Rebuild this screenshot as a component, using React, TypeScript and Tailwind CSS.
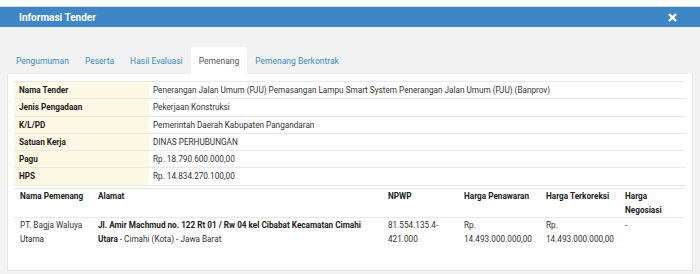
import React from 'react';

const tabs = ['Pengumuman', 'Peserta', 'Hasil Evaluasi', 'Pemenang', 'Pemenang Berkontrak'];

const info: [string, string][] = [
  ['Nama Tender', 'Penerangan Jalan Umum (PJU) Pemasangan Lampu Smart System Penerangan Jalan Umum (PJU) (Banprov)'],
  ['Jenis Pengadaan', 'Pekerjaan Konstruksi'],
  ['K/L/PD', 'Pemerintah Daerah Kabupaten Pangandaran'],
  ['Satuan Kerja', 'DINAS PERHUBUNGAN'],
  ['Pagu', 'Rp. 18.790.600.000,00'],
  ['HPS', 'Rp. 14.834.270.100,00'],
];

const App: React.FC = () => {
  return (
    <div className="w-[700px] h-[274px] overflow-hidden bg-white font-['Roboto',sans-serif] text-[8.2px] text-[#333]">
      <div className="h-[7px] bg-white border-b border-[#dcdcdc]"></div>
      {/* header */}
      <div className="h-[20px] bg-[#3e87c6] flex items-center justify-between pl-[19px] pr-[23px]">
        <span className="text-white font-bold text-[10px]">Informasi Tender</span>
        <svg width="9" height="9" viewBox="0 0 10 10">
          <path d="M2 2 L8 8 M8 2 L2 8" stroke="#fff" strokeWidth="2.6" strokeLinecap="square" />
        </svg>
      </div>

      <div className="bg-[#f2f2f2] h-[247px] pt-[20px] px-[7px]">
        {/* tabs */}
        <div className="flex h-[27px] text-[8.5px] pl-[1px]">
          {tabs.map((t) => (
            <div
              key={t}
              className={
                t === 'Pemenang'
                  ? 'px-[8px] pt-[1px] flex items-center bg-white text-[#555] rounded-t-[2px]'
                  : 'px-[8px] pt-[1px] flex items-center text-[#3c8dbc]'
              }
            >
              {t}
            </div>
          ))}
        </div>

        {/* panel */}
        <div className="bg-white border border-[#e6e6e6] border-t-0 h-[197px] px-[6px] pt-[7px]">
          <div className="border-b border-[#e8e8e8]">
            {info.map(([k, v]) => (
              <div key={k} className="flex h-[17.3px] border-t border-[#e8e8e8]">
                <div className="w-[135px] bg-[#fcf8e3] font-bold text-[#222] flex items-center pl-[5px]">{k}</div>
                <div className="flex-1 flex items-center pl-[4px]">{v}</div>
              </div>
            ))}
          </div>

          <table className="mt-[2px] w-full table-fixed border-t border-[#e8e8e8] border-collapse">
            <colgroup>
              <col className="w-[78px]" />
              <col className="w-[290px]" />
              <col className="w-[76px]" />
              <col className="w-[82px]" />
              <col className="w-[79px]" />
              <col />
            </colgroup>
            <thead>
              <tr className="border-b border-[#e8e8e8] align-top text-[#222] text-left leading-[14px]">
                <th className="pl-[6px] font-bold">Nama Pemenang</th>
                <th className="pl-[6px] font-bold">Alamat</th>
                <th className="pl-[6px] font-bold">NPWP</th>
                <th className="pl-[6px] font-bold">Harga Penawaran</th>
                <th className="pl-[6px] font-bold">Harga Terkoreksi</th>
                <th className="pl-[6px] font-bold">
                  Harga
                  <br />
                  Negosiasi
                </th>
              </tr>
            </thead>
            <tbody>
              <tr className="align-top leading-[14px]">
                <td className="pl-[6px] pr-[4px]">PT. Bagja Waluya Utama</td>
                <td className="pl-[6px] pr-[10px]">
                  <b className="text-[#222]">
                    Jl. Amir Machmud no. 122 Rt 01 / Rw 04 kel Cibabat Kecamatan Cimahi Utara
                  </b>{' '}
                  - Cimahi (Kota) - Jawa Barat
                </td>
                <td className="pl-[6px]">
                  81.554.135.4-
                  <br />
                  421.000
                </td>
                <td className="pl-[6px]">
                  Rp.
                  <br />
                  14.493.000.000,00
                </td>
                <td className="pl-[6px]">
                  Rp.
                  <br />
                  14.493.000.000,00
                </td>
                <td className="pl-[6px]">-</td>
              </tr>
            </tbody>
          </table>
        </div>
      </div>
    </div>
  );
};

export default App;
